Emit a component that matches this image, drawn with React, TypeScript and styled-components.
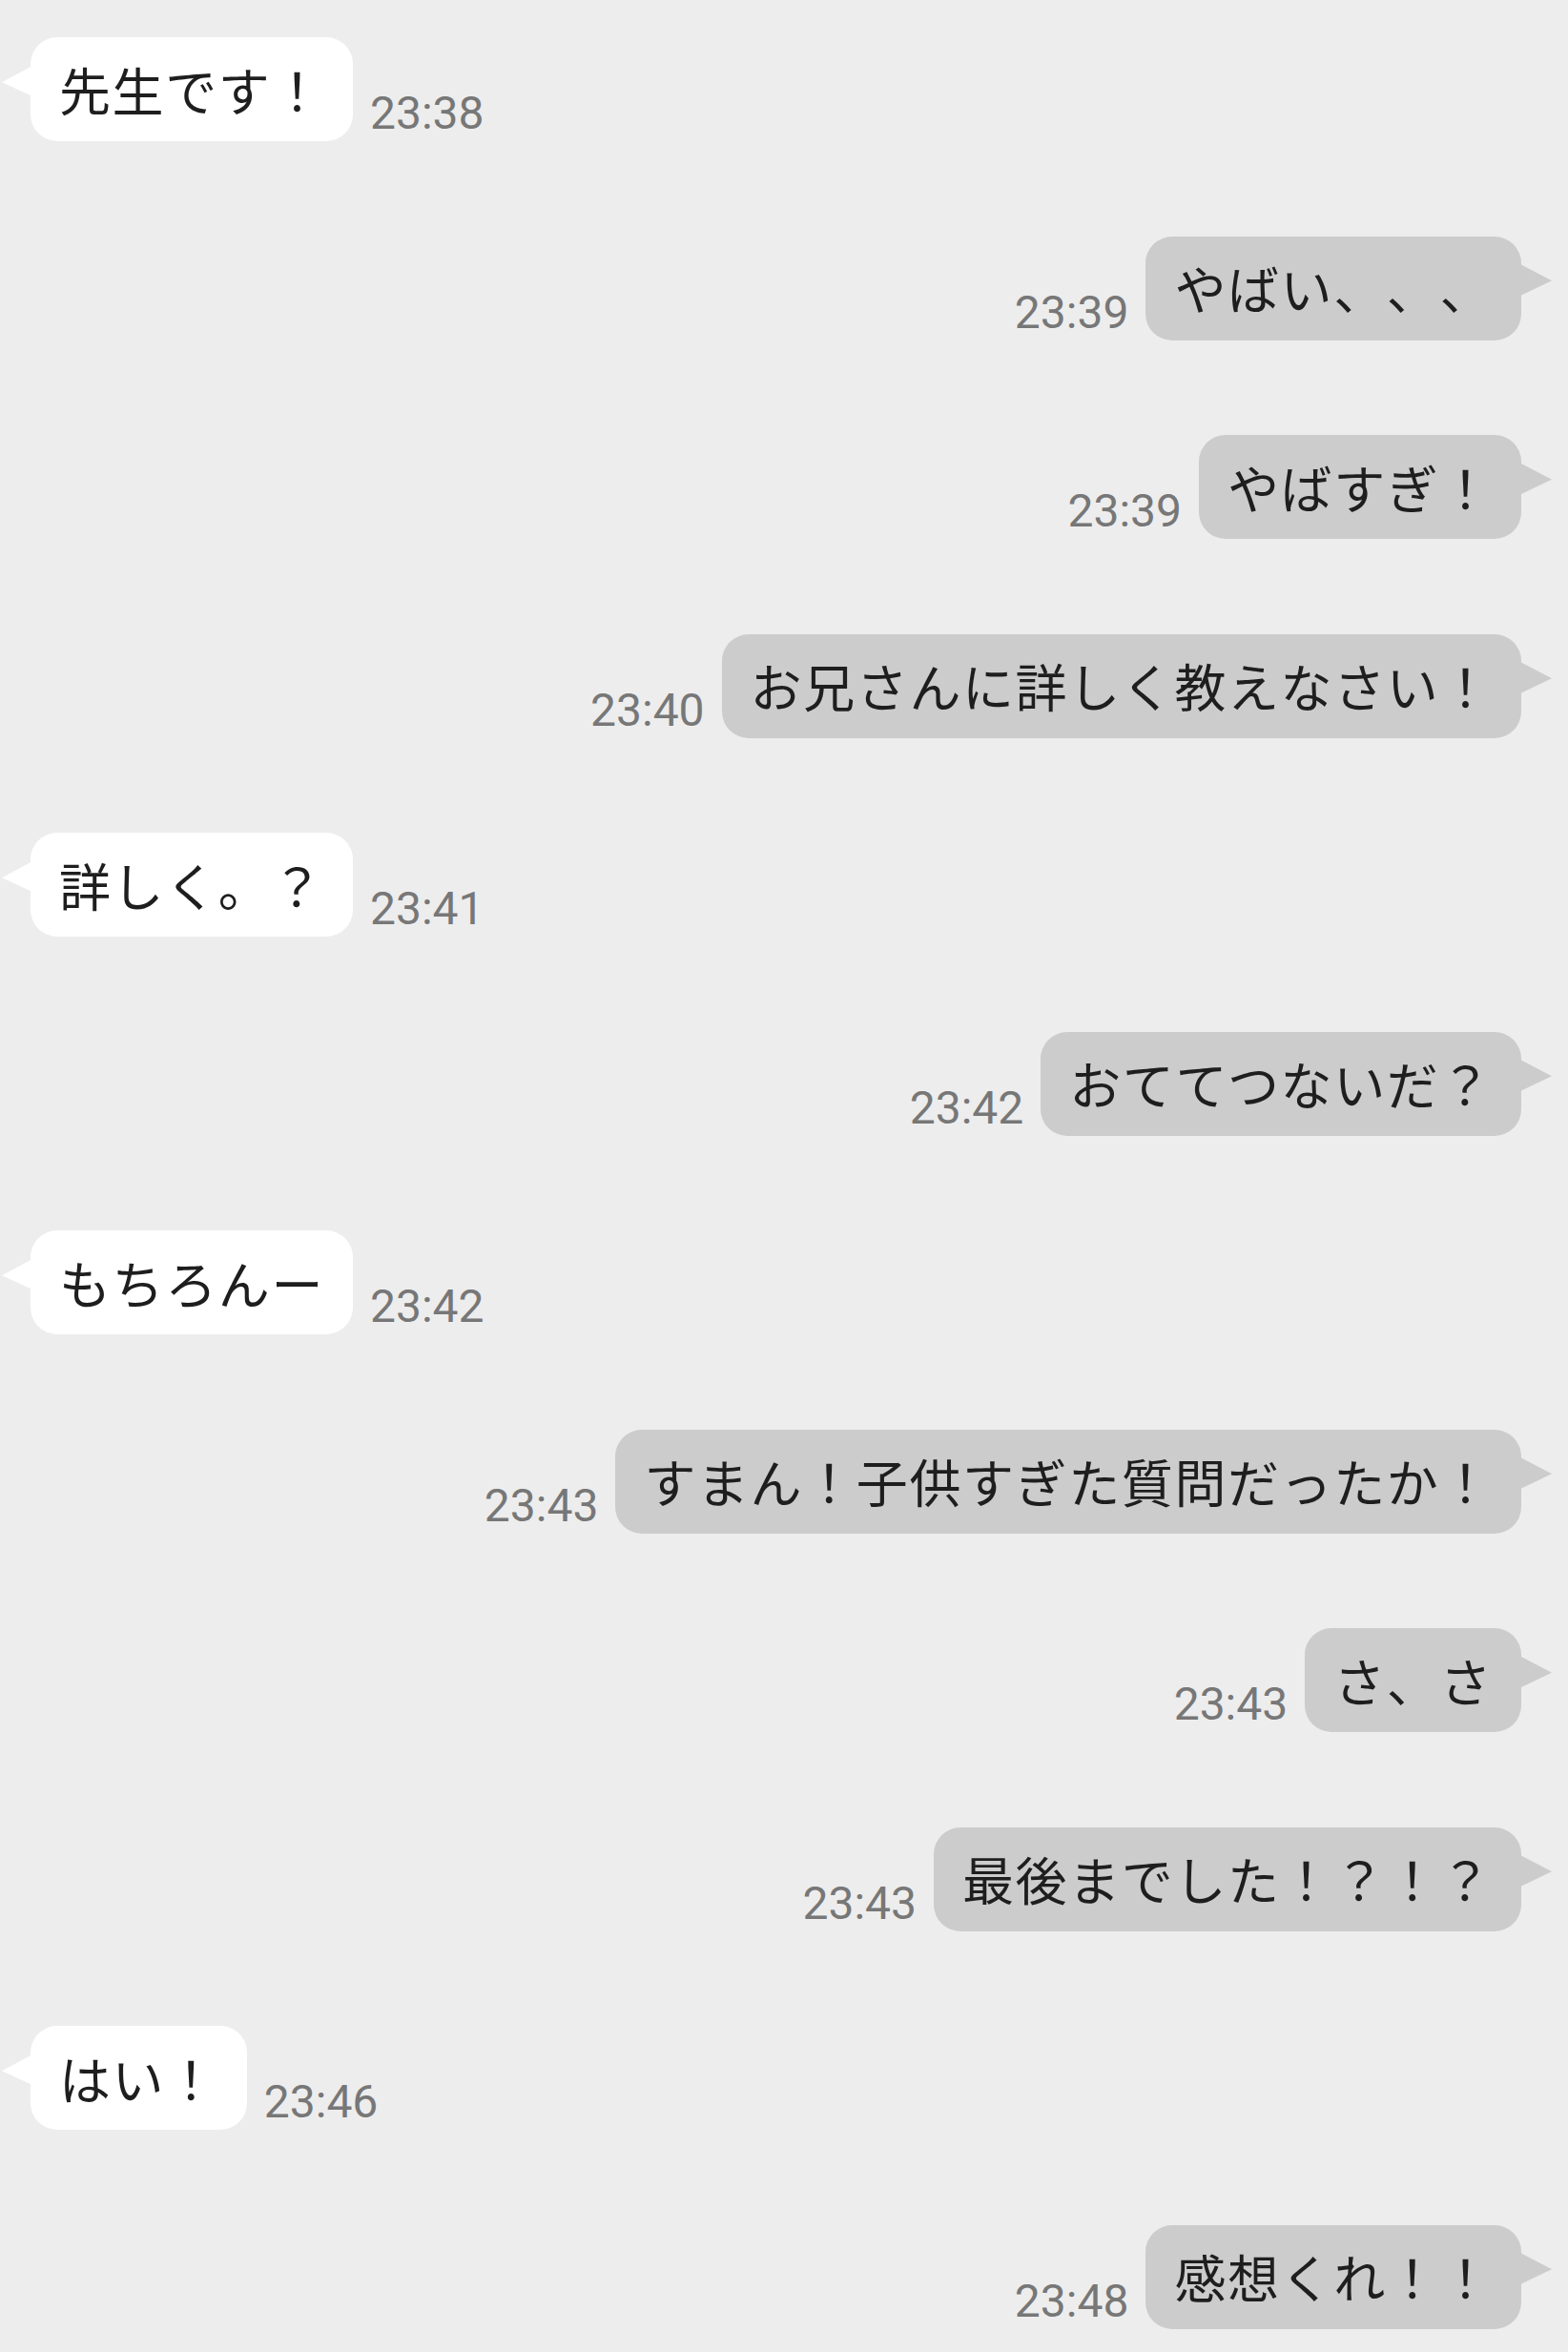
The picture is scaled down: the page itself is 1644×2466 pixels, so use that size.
import React from "react";
import styled, { createGlobalStyle, css } from "styled-components";

const Global = createGlobalStyle`
  html, body {
    margin: 0;
    padding: 0;
    background: #ededed;
  }
  body {
    font-family: "Noto Sans CJK JP", "Noto Sans", sans-serif;
  }
`;

type Side = "left" | "right";

const Thread = styled.main`
  width: 1644px;
  min-height: 2466px;
  box-sizing: border-box;
  padding: 39px 49px 24px 32px;
  background: #ededed;
  display: flex;
  flex-direction: column;
  gap: 99.5px;
`;

const Row = styled.div<{ $side: Side }>`
  display: flex;
  align-items: flex-end;
  gap: 18px;
  justify-content: ${(p) => (p.$side === "left" ? "flex-start" : "flex-end")};
`;

const Bubble = styled.div<{ $side: Side }>`
  position: relative;
  height: 109px;
  box-sizing: border-box;
  display: flex;
  align-items: center;
  padding: 0 30px 0 30px;
  border-radius: 28px;
  font-family: "Noto Sans CJK JP", sans-serif;
  font-size: 54px;
  letter-spacing: 1.6px;
  line-height: 1;
  color: #1e1e1e;
  white-space: nowrap;
  text-spacing-trim: space-all;
  font-feature-settings: normal;
  background: ${(p) => (p.$side === "left" ? "#ffffff" : "#cccccc")};

  &::before {
    content: "";
    position: absolute;
    top: 29px;
    width: 34px;
    height: 34px;
    background: inherit;
    ${(p) =>
      p.$side === "left"
        ? css`
            left: -30px;
            clip-path: polygon(100% 0, 0 54%, 100% 100%);
          `
        : css`
            right: -32px;
            clip-path: polygon(0 0, 100% 52%, 0 100%);
          `}
  }
`;

const Time = styled.span`
  font-family: Roboto, "Liberation Sans", sans-serif;
  font-size: 48px;
  line-height: 48px;
  color: #777777;
  margin-bottom: 5px;
  white-space: nowrap;
`;

type Msg = { side: Side; text: string; time: string };

const messages: Msg[] = [
  { side: "left", text: "先生です！", time: "23:38" },
  { side: "right", text: "やばい、、、", time: "23:39" },
  { side: "right", text: "やばすぎ！", time: "23:39" },
  { side: "right", text: "お兄さんに詳しく教えなさい！", time: "23:40" },
  { side: "left", text: "詳しく。？", time: "23:41" },
  { side: "right", text: "おててつないだ？", time: "23:42" },
  { side: "left", text: "もちろんー", time: "23:42" },
  { side: "right", text: "すまん！子供すぎた質問だったか！", time: "23:43" },
  { side: "right", text: "さ、さ", time: "23:43" },
  { side: "right", text: "最後までした！？！？", time: "23:43" },
  { side: "left", text: "はい！", time: "23:46" },
  { side: "right", text: "感想くれ！！", time: "23:48" },
];

export default function App() {
  return (
    <>
      <Global />
      <Thread>
        {messages.map((m, i) => (
          <Row key={i} $side={m.side}>
            {m.side === "left" ? (
              <>
                <Bubble $side="left">{m.text}</Bubble>
                <Time>{m.time}</Time>
              </>
            ) : (
              <>
                <Time>{m.time}</Time>
                <Bubble $side="right">{m.text}</Bubble>
              </>
            )}
          </Row>
        ))}
      </Thread>
    </>
  );
}
